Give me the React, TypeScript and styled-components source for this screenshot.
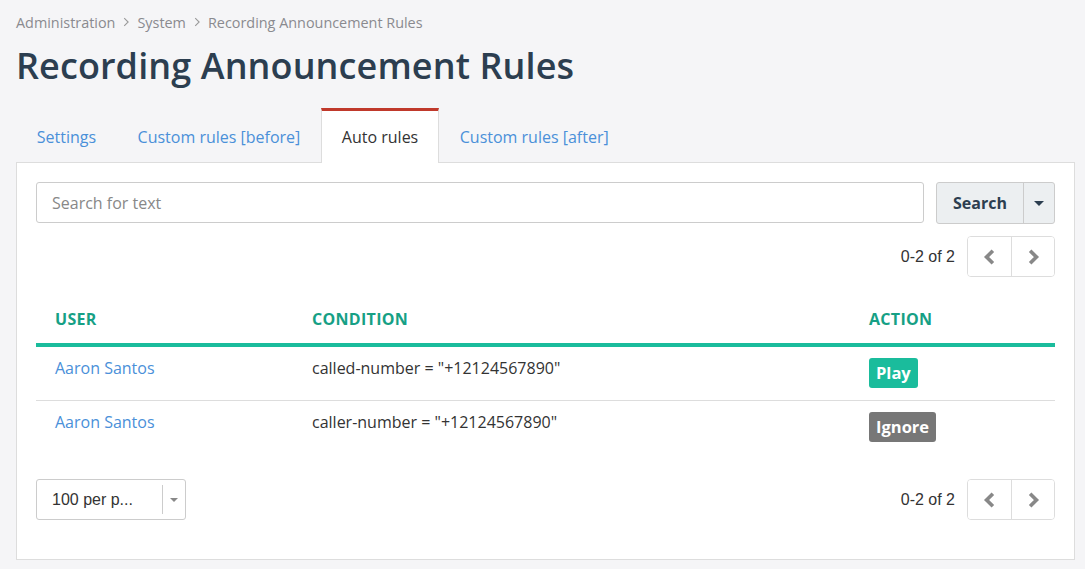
import styled, { createGlobalStyle } from "styled-components";

const GlobalStyle = createGlobalStyle`
    html, body {
        margin: 0;
        padding: 0;
        background: #f5f5f7;
        font-family: "Open Sans", "Liberation Sans", sans-serif;
        color: #333;
    }
    * {
        box-sizing: border-box;
    }
`;

const Page = styled.div`
    padding: 12px 10px 8px 16px;
    width: 1085px;
`;

const Breadcrumbs = styled.nav`
    display: flex;
    align-items: center;
    gap: 6px;
    font-size: 14.4px;
    color: #8a8a8f;
    height: 20px;
`;

const Crumb = styled.span`
    white-space: nowrap;
`;

const Title = styled.h1`
    margin: 10px 0 18px;
    font-size: 36px;
    font-weight: 600;
    color: #2c3e50;
    line-height: 48px;
    letter-spacing: 0.1px;
`;

const Tabs = styled.div`
    display: flex;
    height: 55px;
    margin-bottom: -1px;
    position: relative;
`;

const Tab = styled.div<{ $active?: boolean }>`
    padding: 0 19.75px;
    display: flex;
    align-items: center;
    font-size: 16px;
    color: ${(p) => (p.$active ? "#333" : "#4a90d9")};
    background: ${(p) => (p.$active ? "#fff" : "transparent")};
    border-top: 3px solid ${(p) => (p.$active ? "#c0392b" : "transparent")};
    border-left: 1px solid ${(p) => (p.$active ? "#ddd" : "transparent")};
    border-right: 1px solid ${(p) => (p.$active ? "#ddd" : "transparent")};
    white-space: nowrap;
`;

const Panel = styled.div`
    background: #fff;
    border: 1px solid #ddd;
    padding: 19px 19px 39px;
    width: 1059px;
`;

const SearchRow = styled.div`
    display: flex;
    gap: 12px;
    align-items: flex-start;
`;

const SearchInput = styled.input`
    flex: 1;
    height: 41px;
    border: 1px solid #ccc;
    border-radius: 3px;
    padding: 0 15px;
    font-family: "Open Sans", sans-serif;
    font-size: 16px;
    color: #333;
    outline: none;
    &::placeholder {
        color: #888;
    }
`;

const ButtonGroup = styled.div`
    display: flex;
    height: 42px;
    border: 1px solid #ccc;
    border-radius: 3px;
    background: #eceff1;
    overflow: hidden;
`;

const SearchButton = styled.button`
    border: none;
    background: transparent;
    font-family: "Open Sans", sans-serif;
    font-weight: 700;
    font-size: 16px;
    color: #2c3e50;
    width: 86px;
    padding: 0;
`;

const CaretButton = styled.button`
    border: none;
    border-left: 1px solid #ccc;
    background: transparent;
    width: 31px;
    display: flex;
    align-items: center;
    justify-content: center;
    padding: 0;
`;

const Caret = styled.span<{ $color: string; $size: number }>`
    width: 0;
    height: 0;
    border-left: ${(p) => p.$size}px solid transparent;
    border-right: ${(p) => p.$size}px solid transparent;
    border-top: ${(p) => p.$size}px solid ${(p) => p.$color};
`;

const PagerRow = styled.div`
    display: flex;
    justify-content: flex-end;
    align-items: center;
    gap: 12px;
    margin-top: 12px;
`;

const Count = styled.span`
    font-family: "Liberation Sans", Arial, sans-serif;
    font-size: 16px;
    color: #333;
`;

const Pager = styled.div`
    display: flex;
    height: 41px;
    border: 1px solid #ddd;
    border-radius: 4px;
    overflow: hidden;
`;

const PagerButton = styled.button`
    width: 43px;
    border: none;
    background: #fff;
    display: flex;
    align-items: center;
    justify-content: center;
    padding: 0;
    & + & {
        border-left: 1px solid #ddd;
    }
`;

const Table = styled.table`
    width: 100%;
    border-collapse: collapse;
    margin-top: 22px;
`;

const Th = styled.th<{ $w?: number }>`
    text-align: left;
    font-size: 16px;
    font-weight: 700;
    color: #16a085;
    padding: 9px 19px 13px;
    border-bottom: 4px solid #1abc9c;
    letter-spacing: 0.3px;
    width: ${(p) => (p.$w ? `${p.$w}px` : "auto")};
`;

const Tr = styled.tr`
    & + & td {
        border-top: 1px solid #ddd;
    }
`;

const Td = styled.td`
    font-size: 16px;
    padding: 10px 19px 0;
    height: 55px;
    vertical-align: top;
    color: #333;
`;

const UserLink = styled.a`
    color: #4a90d9;
    text-decoration: none;
`;

const Badge = styled.span<{ $bg: string }>`
    display: inline-block;
    background: ${(p) => p.$bg};
    color: #fff;
    font-weight: 700;
    font-size: 16.5px;
    padding: 0 7px;
    line-height: 30px;
    border-radius: 3px;
    margin-top: 1px;
`;

const Footer = styled.div`
    display: flex;
    justify-content: space-between;
    align-items: center;
    margin-top: 24px;
`;

const Select = styled.div`
    display: flex;
    width: 150px;
    height: 41px;
    border: 1px solid #ccc;
    border-radius: 3px;
    align-items: center;
`;

const SelectValue = styled.span`
    flex: 1;
    padding-left: 15px;
    padding-top: 1px;
    font-family: "Liberation Sans", Arial, sans-serif;
    font-size: 16px;
    color: #333;
`;

const SelectArrow = styled.span`
    width: 23px;
    height: 29px;
    border-left: 1px solid #ccc;
    display: flex;
    align-items: center;
    justify-content: center;
`;

const Chevron = ({ dir, size = 14, color = "#888", stroke = 3 }: { dir: "left" | "right"; size?: number; color?: string; stroke?: number }) => (
    <svg width={size} height={size} viewBox="0 0 14 14">
        <path
            d={dir === "left" ? "M9.5 1.5 L4 7 L9.5 12.5" : "M4.5 1.5 L10 7 L4.5 12.5"}
            fill="none"
            stroke={color}
            strokeWidth={stroke}
        />
    </svg>
);

function PagerControls() {
    return (
        <>
            <Count>0-2 of 2</Count>
            <Pager>
                <PagerButton>
                    <Chevron dir="left" size={16} stroke={3.2} />
                </PagerButton>
                <PagerButton>
                    <Chevron dir="right" size={16} stroke={3.2} />
                </PagerButton>
            </Pager>
        </>
    );
}

const rules = [
    { user: "Aaron Santos", condition: 'called-number = "+12124567890"', action: "Play", color: "#1abc9c" },
    { user: "Aaron Santos", condition: 'caller-number = "+12124567890"', action: "Ignore", color: "#777" },
];

export default function App() {
    return (
        <Page>
            <GlobalStyle />
            <Breadcrumbs>
                <Crumb>Administration</Crumb>
                <Chevron dir="right" size={10} color="#999" stroke={1.5} />
                <Crumb>System</Crumb>
                <Chevron dir="right" size={10} color="#999" stroke={1.5} />
                <Crumb>Recording Announcement Rules</Crumb>
            </Breadcrumbs>
            <Title>Recording Announcement Rules</Title>
            <Tabs>
                <Tab>Settings</Tab>
                <Tab>Custom rules [before]</Tab>
                <Tab $active>Auto rules</Tab>
                <Tab>Custom rules [after]</Tab>
            </Tabs>
            <Panel>
                <SearchRow>
                    <SearchInput placeholder="Search for text" />
                    <ButtonGroup>
                        <SearchButton>Search</SearchButton>
                        <CaretButton>
                            <Caret $color="#2c3e50" $size={5} />
                        </CaretButton>
                    </ButtonGroup>
                </SearchRow>
                <PagerRow>
                    <PagerControls />
                </PagerRow>
                <Table>
                    <thead>
                        <tr>
                            <Th $w={257}>USER</Th>
                            <Th $w={557}>CONDITION</Th>
                            <Th>ACTION</Th>
                        </tr>
                    </thead>
                    <tbody>
                        {rules.map((r, i) => (
                            <Tr key={i}>
                                <Td>
                                    <UserLink href="#">{r.user}</UserLink>
                                </Td>
                                <Td>{r.condition}</Td>
                                <Td>
                                    <Badge $bg={r.color}>{r.action}</Badge>
                                </Td>
                            </Tr>
                        ))}
                    </tbody>
                </Table>
                <Footer>
                    <Select>
                        <SelectValue>100 per p...</SelectValue>
                        <SelectArrow>
                            <Caret $color="#888" $size={4} />
                        </SelectArrow>
                    </Select>
                    <PagerRow style={{ marginTop: 0 }}>
                        <PagerControls />
                    </PagerRow>
                </Footer>
            </Panel>
        </Page>
    );
}
